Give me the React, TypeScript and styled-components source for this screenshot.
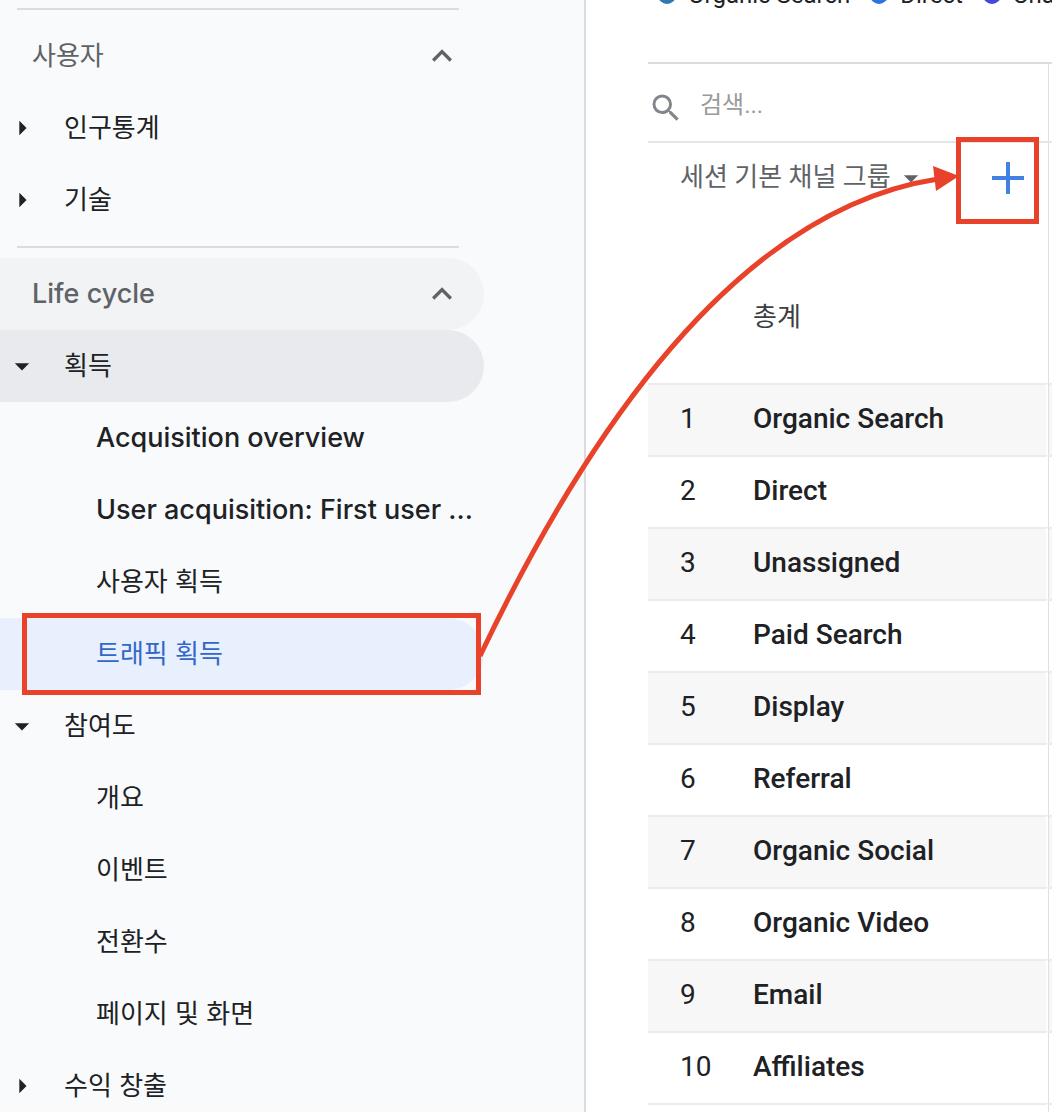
import React from "react";
import styled, { createGlobalStyle, css } from "styled-components";

const color = {
  ink: "#202124",
  muted: "#5f6368",
  sidebar: "#f9fafc",
  line: "#dadce0",
  rowLine: "#ebebeb",
  stripe: "#f7f7f7",
  mark: "#e8432a",
};

const navFont = `Inter, "Noto Sans CJK KR", sans-serif`;
const tableFont = `Roboto, "Noto Sans CJK KR", sans-serif`;

const GlobalStyle = createGlobalStyle`
  *, *::before, *::after { box-sizing: border-box; }
  body { margin: 0; background: #fff; color: ${color.ink}; }
  button, input, select { font: inherit; color: inherit; }
`;

const Page = styled.div`
  position: relative;
  display: flex;
  height: 100vh;
  overflow: hidden;
`;

/* ---------- Sidebar ---------- */

const Sidebar = styled.nav`
  flex: 0 0 586px;
  padding: 8px 100px 0 0;
  overflow: hidden;
  background: ${color.sidebar};
  border-right: 2px solid ${color.line};
  font-family: ${navFont};
`;

const Section = styled.section`
  margin-bottom: 10px;
`;

const Rule = styled.hr`
  height: 2px;
  margin: 0 25px 10px 17px;
  border: 0;
  background: ${color.line};
`;

const rowStyle = css`
  position: relative;
  display: flex;
  align-items: center;
  width: 100%;
  height: 72px;
  border: 0;
  border-radius: 0 36px 36px 0;
  background: transparent;
  text-align: left;
  text-decoration: none;
  white-space: nowrap;
  cursor: pointer;
`;

const SectionHeader = styled.button<{ $hovered?: boolean }>`
  ${rowStyle}
  justify-content: space-between;
  padding: 0 22px 0 32px;
  background: ${(p) => (p.$hovered ? "#f1f3f4" : "transparent")};
  color: ${color.muted};
`;

const GroupButton = styled.button<{ $current?: boolean }>`
  ${rowStyle}
  gap: 26px;
  padding: 0 22px 0 6px;
  background: ${(p) => (p.$current ? "#e8eaed" : "transparent")};
  color: ${color.ink};
`;

const ItemLink = styled.a<{ $active?: boolean }>`
  ${rowStyle}
  padding: 0 8px 0 96px;
  background: ${(p) => (p.$active ? "#e8f0fe" : "transparent")};
  color: ${(p) => (p.$active ? "#3367c8" : color.ink)};
`;

const Label = styled.span<{ $latin?: boolean }>`
  font-size: ${(p) => (p.$latin ? 27 : 26)}px;
  font-weight: ${(p) => (p.$latin ? 500 : 400)};
  line-height: 36px;
`;

const Icon = styled.svg<{ $size: number }>`
  display: block;
  flex: none;
  width: ${(p) => p.$size}px;
  height: ${(p) => p.$size}px;
  fill: currentColor;
`;

/* ---------- Report ---------- */

const Report = styled.main`
  flex: 1;
  min-width: 0;
  padding-left: 62px;
  font-family: ${tableFont};
`;

const Legend = styled.ul`
  display: flex;
  align-items: flex-end;
  gap: 20px;
  height: 9px;
  margin: 0 0 53px;
  padding: 0 0 0 10px;
  list-style: none;
  white-space: nowrap;
`;

const LegendItem = styled.li`
  display: flex;
  align-items: center;
  gap: 12px;
  font-size: 24px;
  line-height: 28px;
`;

const Dot = styled.span<{ $color: string }>`
  width: 18px;
  height: 18px;
  border-radius: 50%;
  background: ${(p) => p.$color};
`;

const Table = styled.table`
  width: 100%;
  border-spacing: 0;
  table-layout: fixed;
  border-top: 2px solid ${color.line};
  font-size: 28px;
  line-height: 36px;
`;

const NumberCol = styled.col`
  width: 105px;
`;

const NameCol = styled.col`
  width: 295px;
`;

const HeadCell = styled.th<{ $height: number; $ruled?: boolean }>`
  position: relative;
  height: ${(p) => p.$height}px;
  padding: 0;
  border-bottom: ${(p) => (p.$ruled ? "2px solid #e3e5e8" : "0")};
  font-weight: 400;
  text-align: left;
  vertical-align: top;
`;

const MetricHeadCell = styled(HeadCell)`
  border-left: 1px solid #e0e0e0;
`;

const SearchBox = styled.div`
  display: flex;
  align-items: center;
  gap: 16px;
  padding-top: 26px;
  color: #80868b;
`;

const SearchInput = styled.input`
  flex: 1;
  min-width: 0;
  height: 36px;
  padding: 0 0 6px;
  border: 0;
  outline: 0;
  background: transparent;
  font-size: 24px;

  &::placeholder {
    color: #9a9a9a;
    opacity: 1;
  }
`;

const DimensionBar = styled.div`
  display: flex;
  align-items: center;
  gap: 4px;
  height: 70px;
  padding-left: 32px;
  color: ${color.muted};
`;

const DimensionSelect = styled.select`
  height: 40px;
  padding: 0 0 2px;
  border: 0;
  outline: 0;
  appearance: none;
  background: transparent;
  font-size: 26px;
`;

const AddButton = styled.button`
  display: flex;
  align-items: center;
  justify-content: center;
  width: 48px;
  height: 48px;
  margin: 0 16px 0 auto;
  padding: 0;
  border: 0;
  background: transparent;
  color: #4280e4;
`;

const cellStyle = css<{ $striped?: boolean }>`
  height: 72px;
  padding: 0 0 2px;
  border-top: 2px solid ${color.rowLine};
  background: ${(p) => (p.$striped ? color.stripe : "#fff")};
  font-weight: 400;
  text-align: left;
`;

const NumberCell = styled.td<{ $striped?: boolean }>`
  ${cellStyle}
  padding-left: 32px;
`;

const NameCell = styled.th<{ $striped?: boolean }>`
  ${cellStyle}
  border-right: 2px solid #fff;
  font-weight: 500;
`;

const MetricCell = styled.td<{ $striped?: boolean }>`
  ${cellStyle}
  border-left: 1px solid #e0e0e0;
`;

const TotalLabel = styled.th`
  height: 132px;
  padding: 0;
  color: #3c4043;
  font-size: 26px;
  font-weight: 400;
  text-align: left;
`;

const TotalCell = styled.td`
  padding: 0;
  border-left: 1px solid #e0e0e0;
`;

/* ---------- Annotations ---------- */

const Mark = styled.span<{ $inset: string }>`
  position: absolute;
  z-index: 1;
  inset: ${(p) => p.$inset};
  border: 5px solid ${color.mark};
  pointer-events: none;
`;

const ArrowLayer = styled.svg`
  position: absolute;
  z-index: 2;
  top: 0;
  left: 0;
  width: 1052px;
  height: 700px;
  pointer-events: none;
`;

/* ---------- Icons ---------- */

const ChevronUp = () => (
  <Icon $size={40} viewBox="0 0 24 24" aria-hidden>
    <path d="M12 8l-6 6 1.41 1.41L12 10.83l4.59 4.58L18 14z" />
  </Icon>
);

const Caret = ({ open }: { open?: boolean }) => (
  <Icon $size={32} viewBox="0 0 24 24" aria-hidden>
    <path d={open ? "M6.6 10l5.4 5.4 5.4-5.4z" : "M10 17.4l5.4-5.4L10 6.6z"} />
  </Icon>
);

const SearchIcon = () => (
  <Icon $size={36} viewBox="0 0 24 24" aria-hidden>
    <path d="M15.5 14h-.79l-.28-.27A6.471 6.471 0 0 0 16 9.5 6.5 6.5 0 1 0 9.5 16c1.61 0 3.09-.59 4.23-1.57l.27.28v.79l5 4.99L20.49 19l-4.99-5zm-6 0C7.01 14 5 11.99 5 9.5S7.01 5 9.5 5 14 7.01 14 9.5 11.99 14 9.5 14z" />
  </Icon>
);

const PlusIcon = () => (
  <Icon $size={32} viewBox="0 0 32 32" aria-hidden>
    <path d="M14 0h4v14h14v4H18v14h-4V18H0v-4h14z" />
  </Icon>
);

/* ---------- Data ---------- */

const legend = [
  { name: "Organic Search", color: "#2f78b0" },
  { name: "Direct", color: "#2f73e0" },
  { name: "Unassigned", color: "#4744e0" },
];

const channels = [
  "Organic Search",
  "Direct",
  "Unassigned",
  "Paid Search",
  "Display",
  "Referral",
  "Organic Social",
  "Organic Video",
  "Email",
  "Affiliates",
];

const isLatin = (text: string) => /^[\x20-\x7e]+$/.test(text);

const Item = ({ text, active }: { text: string; active?: boolean }) => (
  <ItemLink href="#" $active={active} aria-current={active ? "page" : undefined}>
    <Label $latin={isLatin(text)}>{text}</Label>
    {active && <Mark $inset="-5px 3px -5px 22px" />}
  </ItemLink>
);

const Group = ({ text, open, current }: { text: string; open?: boolean; current?: boolean }) => (
  <GroupButton type="button" $current={current} aria-expanded={!!open}>
    <Caret open={open} />
    <Label>{text}</Label>
  </GroupButton>
);

export default function App() {
  return (
    <Page>
      <GlobalStyle />
      <Sidebar>
        <Section>
          <Rule />
          <SectionHeader type="button" aria-expanded>
            <Label>사용자</Label>
            <ChevronUp />
          </SectionHeader>
          <Group text="인구통계" />
          <Group text="기술" />
        </Section>
        <Section>
          <Rule />
          <SectionHeader type="button" $hovered aria-expanded>
            <Label $latin>Life cycle</Label>
            <ChevronUp />
          </SectionHeader>
          <Group text="획득" open current />
          <Item text="Acquisition overview" />
          <Item text="User acquisition: First user ..." />
          <Item text="사용자 획득" />
          <Item text="트래픽 획득" active />
          <Group text="참여도" open />
          <Item text="개요" />
          <Item text="이벤트" />
          <Item text="전환수" />
          <Item text="페이지 및 화면" />
          <Group text="수익 창출" />
        </Section>
      </Sidebar>

      <Report>
        <Legend>
          {legend.map((entry) => (
            <LegendItem key={entry.name}>
              <Dot $color={entry.color} />
              {entry.name}
            </LegendItem>
          ))}
        </Legend>
        <Table>
          <colgroup>
            <NumberCol />
            <NameCol />
            <col />
          </colgroup>
          <thead>
            <tr>
              <HeadCell colSpan={2} $height={79} $ruled>
                <SearchBox>
                  <SearchIcon />
                  <SearchInput type="text" placeholder="검색..." aria-label="검색" />
                </SearchBox>
              </HeadCell>
              <MetricHeadCell $height={79} $ruled />
            </tr>
            <tr>
              <HeadCell colSpan={2} $height={108}>
                <DimensionBar>
                  <DimensionSelect aria-label="측정기준">
                    <option>세션 기본 채널 그룹</option>
                  </DimensionSelect>
                  <Caret open />
                  <AddButton type="button" aria-label="추가">
                    <PlusIcon />
                  </AddButton>
                </DimensionBar>
                <Mark $inset="-6px 9px 27px 308px" />
              </HeadCell>
              <MetricHeadCell $height={108} />
            </tr>
          </thead>
          <tbody>
            <tr>
              <td />
              <TotalLabel scope="row">총계</TotalLabel>
              <TotalCell />
            </tr>
            {channels.map((name, i) => (
              <tr key={name}>
                <NumberCell $striped={i % 2 === 0}>{i + 1}</NumberCell>
                <NameCell scope="row" $striped={i % 2 === 0}>
                  {name}
                </NameCell>
                <MetricCell $striped={i % 2 === 0} />
              </tr>
            ))}
          </tbody>
          <tfoot>
            <tr>
              <NumberCell />
              <NameCell as="td" />
              <MetricCell />
            </tr>
          </tfoot>
        </Table>
      </Report>

      <ArrowLayer viewBox="0 0 1052 700" aria-hidden>
        <path d="M480 656Q689 217 938 179" fill="none" stroke={color.mark} strokeWidth="5" />
        <path d="M933 166L959 176L936 191Z" fill={color.mark} />
      </ArrowLayer>
    </Page>
  );
}
